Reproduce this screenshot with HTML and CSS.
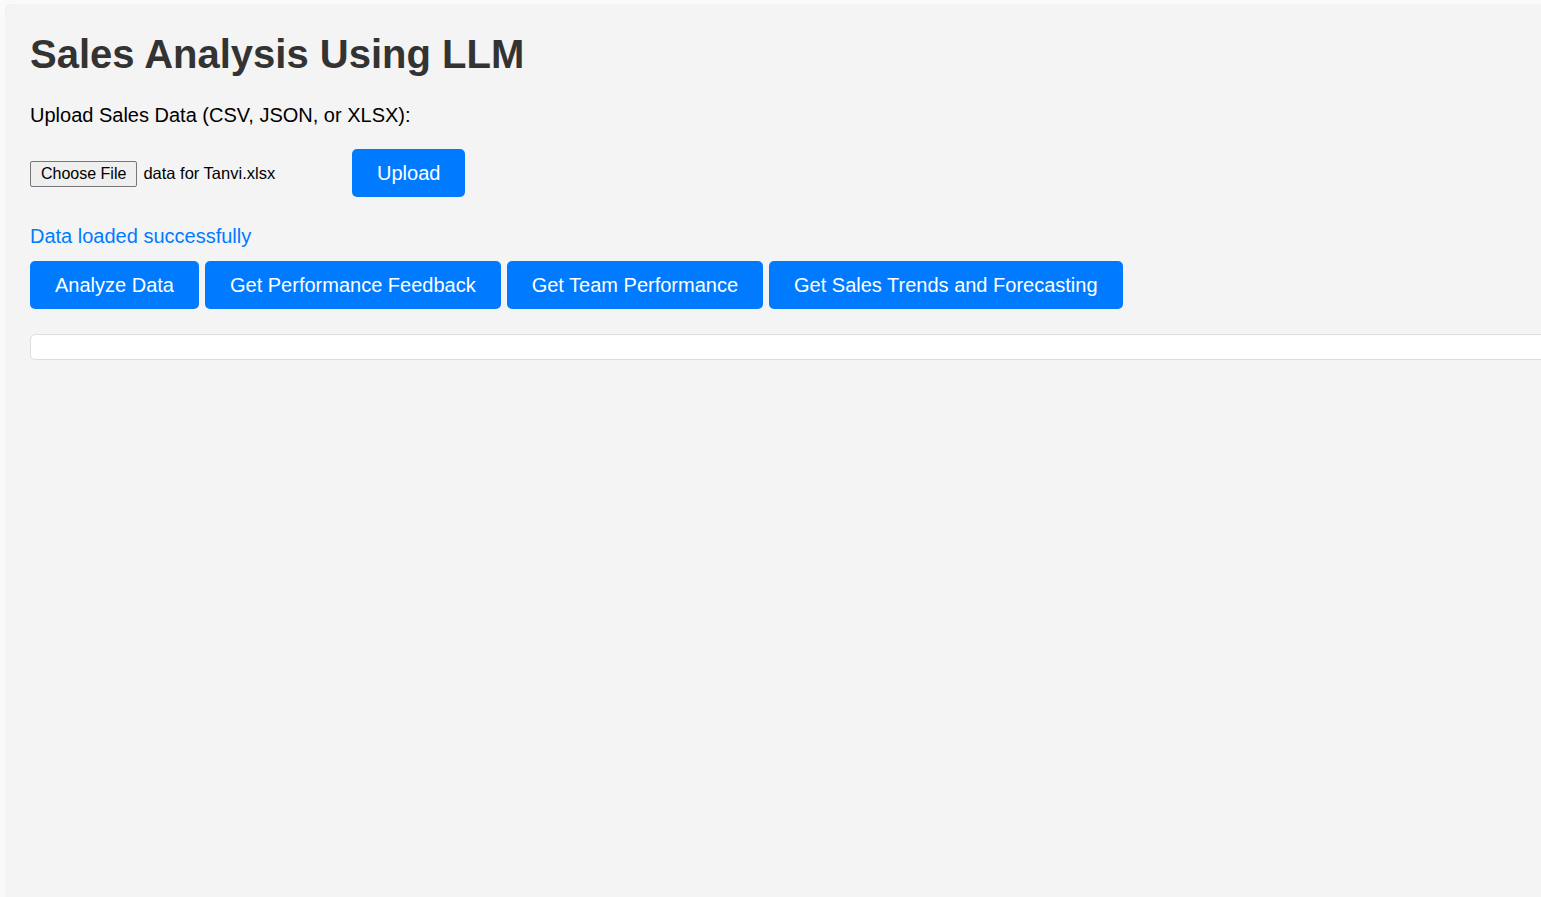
FILE: index.html
```html
<!DOCTYPE html>
<html lang="en">
<head>
<meta charset="utf-8">
<title>Sales Analysis Using LLM</title>
<link rel="stylesheet" href="styles.css">
</head>
<body>
<div class="container">
  <h1 class="title">Sales Analysis Using LLM</h1>
  <label class="upload-label" for="file">Upload Sales Data (CSV, JSON, or XLSX):</label>
  <div class="upload-row">
    <div class="file-input">
      <span class="choose-btn">Choose File</span>
      <span class="file-name">data for Tanvi.xlsx</span>
    </div>
    <button class="btn">Upload</button>
  </div>
  <p class="status">Data loaded successfully</p>
  <div class="actions">
    <button class="btn">Analyze Data</button>
    <button class="btn">Get Performance Feedback</button>
    <button class="btn">Get Team Performance</button>
    <button class="btn">Get Sales Trends and Forecasting</button>
  </div>
  <div class="result"></div>
</div>
</body>
</html>
```
FILE: styles.css
```css
html, body {
  overflow: hidden;
}
body {
  margin: 4px 0 0 5px;
  background: #fafafa;
  font-family: "Liberation Sans", Arial, sans-serif;
}
.container {
  width: 1600px;
  min-height: 1000px;
  box-sizing: border-box;
  background: #f4f4f4;
  border-radius: 10px;
  box-shadow: 0 0 4px rgba(0, 0, 0, 0.12);
  padding: 27px 25px 0 25px;
}
.title {
  margin: 0;
  font-size: 40px;
  line-height: 46px;
  font-weight: bold;
  color: #333;
}
.upload-label {
  display: block;
  margin-top: 27px;
  font-size: 20px;
  line-height: 23px;
  color: #000;
}
.upload-row {
  display: flex;
  align-items: center;
  margin-top: 22px;
}
.file-input {
  width: 322px;
  display: flex;
  align-items: center;
  font-size: 16px;
  color: #000;
}
.choose-btn {
  box-sizing: border-box;
  height: 26px;
  padding: 0 10px;
  border: 1px solid #767676;
  border-radius: 2px;
  background: #efefef;
  line-height: 24px;
  font-size: 16px;
  margin-top: 2px;
}
.file-name {
  margin-left: 6px;
  font-size: 16.5px;
}
.btn {
  font-family: "Liberation Sans", Arial, sans-serif;
  font-size: 20px;
  line-height: 24px;
  padding: 12px 25px;
  border: none;
  border-radius: 5px;
  background: #007bff;
  color: #fff;
}
.status {
  margin: 28px 0 0;
  font-size: 20px;
  line-height: 23px;
  color: #007bff;
}
.actions {
  display: flex;
  gap: 6px;
  margin-top: 13px;
}
.result {
  margin-top: 25px;
  height: 26px;
  box-sizing: border-box;
  background: #fff;
  border: 1px solid #ddd;
  border-radius: 5px;
}
```
